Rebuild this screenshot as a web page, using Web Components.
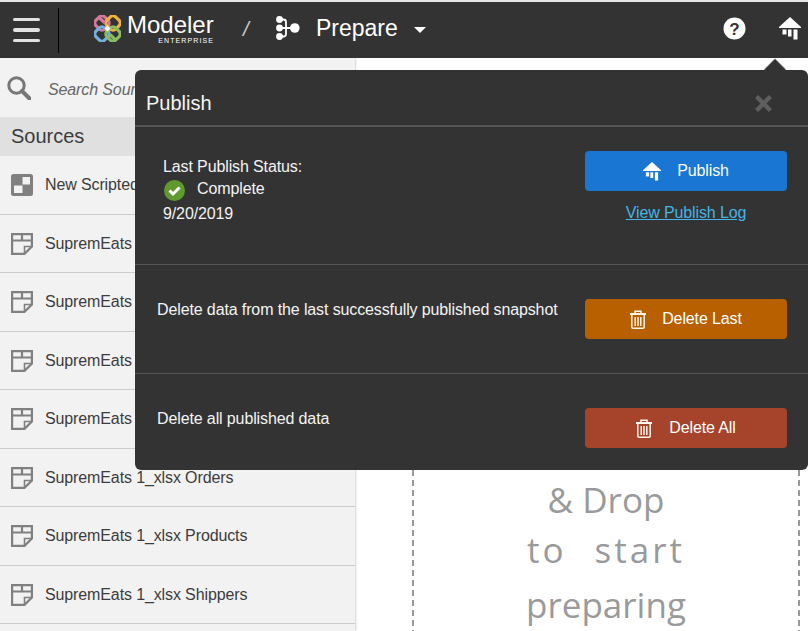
<!DOCTYPE html>
<html lang="en">
<head>
<meta charset="utf-8">
<title>Modeler Enterprise - Prepare</title>
<style>
    html, body { margin: 0; height: 100%; overflow: hidden; background: #fff; }
    body { font-family: "Liberation Sans", Arial, sans-serif; font-size: 16px; letter-spacing: -0.12px; }
    .body-row { display: flex; height: 573px; }
</style>
</head>
<body>
<app-header></app-header>
<div class="body-row">
    <source-panel>
        <source-item kind="script">New Scripted</source-item>
        <source-item>SupremEats</source-item>
        <source-item>SupremEats</source-item>
        <source-item>SupremEats</source-item>
        <source-item>SupremEats</source-item>
        <source-item>SupremEats 1_xlsx Orders</source-item>
        <source-item>SupremEats 1_xlsx Products</source-item>
        <source-item>SupremEats 1_xlsx Shippers</source-item>
    </source-panel>
    <drop-zone></drop-zone>
</div>
<publish-popover>
    <publish-row pad-left="28" pad-top="24" height="138" text-top="4">
        <div slot="info">
            <div>Last Publish Status:</div>
            <status-line>Complete</status-line>
            <div>9/20/2019</div>
        </div>
        <action-button kind="publish" slot="action">Publish</action-button>
        <a slot="link" href="#" style="color:#45b4e6">View Publish Log</a>
    </publish-row>
    <publish-row pad-left="22" pad-top="34" height="109" text-top="-1">
        <div slot="info">Delete data from the last successfully published snapshot</div>
        <action-button kind="last" slot="action">Delete Last</action-button>
    </publish-row>
    <publish-row pad-left="22" pad-top="34" height="96" text-top="-1" last>
        <div slot="info">Delete all published data</div>
        <action-button kind="all" slot="action">Delete All</action-button>
    </publish-row>
</publish-popover>

<script>
const PUBLISH_ICON = (w, h, color) => `
    <svg width="${w}" height="${h}" viewBox="0 0 22 23" fill="${color}">
        <path d="M11 0 L22 10 L22 11 L0 11 L0 10 Z"/>
        <rect x="3.5" y="12.5" width="4" height="5"/>
        <rect x="9" y="12.5" width="3.5" height="7"/>
        <rect x="14.5" y="12.5" width="4" height="10"/>
    </svg>`;

const TRASH_ICON = `
    <svg width="16" height="19" viewBox="0 0 16 19" fill="none" stroke="#fff5e8" stroke-width="1.5">
        <path d="M0 4 H16" stroke-width="2"/>
        <path d="M5 3.5 V1.2 H11 V3.5"/>
        <path d="M1.8 5 V17 Q1.8 18.2 3 18.2 H13 Q14.2 18.2 14.2 17 V5"/>
        <path d="M5.2 7 V16 M8 7 V16 M10.8 7 V16"/>
    </svg>`;

class AppHeader extends HTMLElement {
    connectedCallback() {
        this.attachShadow({ mode: 'open' });
        this.shadowRoot.innerHTML = `
            <style>
                :host {
                    display: flex;
                    align-items: center;
                    height: 56px;
                    border-top: 2px solid #e6e6e6;
                    background: #333;
                    color: #fff;
                    letter-spacing: 0;
                }
                .burger {
                    width: 27px;
                    margin: 0 18px 0 13px;
                    display: flex;
                    flex-direction: column;
                    gap: 7px;
                }
                .burger i { height: 3.5px; border-radius: 2px; background: #e2e2e2; }
                .divider { width: 1px; height: 45px; background: #000; margin-right: 35px; }
                .logo { display: block; margin: -3px 6px 0 0; }
                .brand { width: 87px; margin-top: -3px; }
                .brand b { display: block; font-weight: 400; font-size: 24px; line-height: 24px; }
                .brand span {
                    display: block;
                    text-align: right;
                    font-size: 7px;
                    line-height: 7px;
                    letter-spacing: 1.1px;
                }
                .slash { margin: -2px 0 0 29px; font-size: 21px; color: #c9c9c9; width: 33px; font-style: italic; }
                .flow { margin: -4px 16px 0 0; }
                .page { font-size: 23px; margin-top: -3px; }
                .caret {
                    width: 0; height: 0;
                    margin: 0 0 0 16px;
                    border: 6px solid transparent;
                    border-top-color: #fff;
                    border-bottom: 0;
                }
                .right { margin-left: auto; display: flex; align-items: center; gap: 33px; margin-right: 7px; }
                .right svg { margin-top: -3px; }
                svg { display: block; }
            </style>
            <div class="burger"><i></i><i></i><i></i></div>
            <div class="divider"></div>
            <svg class="logo" width="27" height="27" viewBox="0 0 27 27" fill="none" stroke-width="3.2">
                <rect x="-6.2" y="-6.2" width="12.4" height="12.4" rx="4" transform="translate(8 8) rotate(45)" stroke="#d6789a"/>
                <rect x="-6.2" y="-6.2" width="12.4" height="12.4" rx="4" transform="translate(19 8) rotate(45)" stroke="#eeb33f"/>
                <rect x="-6.2" y="-6.2" width="12.4" height="12.4" rx="4" transform="translate(8 19) rotate(45)" stroke="#73b0de"/>
                <rect x="-6.2" y="-6.2" width="12.4" height="12.4" rx="4" transform="translate(19 19) rotate(45)" stroke="#8dbb63"/>
                <path d="M5 2.5 L11 8" stroke="#d6789a"/>
                <path d="M21 24.5 L16 19.5" stroke="#8dbb63"/>
                <path d="M13.5 10.5 L16.5 13.5 L13.5 16.5 L10.5 13.5 Z" fill="#fff" stroke="none"/>
            </svg>
            <div class="brand"><b>Modeler</b><span>ENTERPRISE</span></div>
            <div class="slash">/</div>
            <svg class="flow" width="24" height="24" viewBox="0 0 24 24" fill="#fff">
                <circle cx="3.5" cy="3.5" r="3.4"/><circle cx="3.5" cy="12" r="3.4"/><circle cx="3.5" cy="20.5" r="3.4"/>
                <circle cx="18.8" cy="12" r="4.8"/>
                <path d="M4 3.5 H7.5 Q10 3.5 10 6 V18 Q10 20.5 7.5 20.5 H4 M4 12 H18" fill="none" stroke="#fff" stroke-width="1.8"/>
            </svg>
            <span class="page">Prepare</span>
            <div class="caret"></div>
            <div class="right">
                <svg width="23" height="23" viewBox="0 0 23 23">
                    <circle cx="11.5" cy="11.5" r="11" fill="#fff"/>
                    <text x="11.5" y="17.5" text-anchor="middle" font-family="Liberation Sans, sans-serif" font-weight="700" font-size="17" fill="#333">?</text>
                </svg>
                ${PUBLISH_ICON(22, 23, '#fff')}
            </div>
        `;
    }
}
customElements.define('app-header', AppHeader);

class SourcePanel extends HTMLElement {
    connectedCallback() {
        this.attachShadow({ mode: 'open' });
        this.shadowRoot.innerHTML = `
            <style>
                :host {
                    display: block;
                    flex: 0 0 355px;
                    background: #f2f2f2;
                    box-shadow: 1px 0 2px rgba(0, 0, 0, 0.18);
                    color: #3c3c3c;
                    overflow: hidden;
                }
                .search {
                    display: flex;
                    align-items: center;
                    box-sizing: border-box;
                    height: 59px;
                    padding: 4px 0 0 7px;
                    gap: 17px;
                }
                .search svg { margin-top: -4px; }
                .search span { font-style: italic; color: #666; }
                h2 {
                    margin: 0;
                    height: 39px;
                    line-height: 38px;
                    padding-left: 11px;
                    font-size: 20px;
                    font-weight: 400;
                    letter-spacing: 0;
                    background: #e0e0e0;
                }
            </style>
            <div class="search">
                <svg width="24" height="24" viewBox="0 0 24 24" fill="none" stroke="#777">
                    <circle cx="9.5" cy="9.5" r="7.7" stroke-width="3"/>
                    <path d="M15 15 L22.5 22.5" stroke-width="4" stroke-linecap="round"/>
                </svg>
                <span>Search Sources</span>
            </div>
            <h2>Sources</h2>
            <slot></slot>
        `;
    }
}
customElements.define('source-panel', SourcePanel);

class SourceItem extends HTMLElement {
    connectedCallback() {
        const icon = this.getAttribute('kind') === 'script'
            ? `<svg width="22" height="22" viewBox="0 0 22 22">
                   <rect width="22" height="22" rx="2.5" fill="#808080"/>
                   <rect x="11.5" y="3" width="7.5" height="7.5" fill="#f2f2f2"/>
                   <rect x="3" y="11.5" width="8.5" height="7.5" fill="#f2f2f2"/>
               </svg>`
            : `<svg width="22" height="22" viewBox="0 0 22 22" fill="none" stroke="#808080" stroke-width="2.2">
                   <path d="M1.1 1.1 H20.9 V13.5 L13.5 20.9 H1.1 Z"/>
                   <path d="M1.1 7.5 H20.9 M11 1.1 V7.5" />
                   <path d="M20.9 13.5 H13.5 V20.9" stroke-width="1.6"/>
               </svg>`;
        this.attachShadow({ mode: 'open' });
        this.shadowRoot.innerHTML = `
            <style>
                :host {
                    display: flex;
                    align-items: center;
                    box-sizing: border-box;
                    height: 58.5px;
                    padding: 0.5px 0 0 11px;
                    gap: 12px;
                    border-bottom: 1px solid #ccc;
                    white-space: nowrap;
                }
                svg { flex: none; display: block; }
            </style>
            ${icon}
            <slot></slot>
        `;
    }
}
customElements.define('source-item', SourceItem);

class DropZone extends HTMLElement {
    connectedCallback() {
        this.attachShadow({ mode: 'open' });
        this.shadowRoot.innerHTML = `
            <style>
                :host {
                    display: block;
                    flex: 1;
                    min-width: 0;
                    padding: 42px 8px 0 57px;
                    overflow: hidden;
                }
                .box {
                    height: 600px;
                    box-sizing: border-box;
                    padding-top: 322px;
                    text-align: center;
                    color: #9a9a9a;
                    font-family: "Open Sans", sans-serif;
                    font-size: 35px;
                    line-height: 52px;
                    letter-spacing: 0;
                    background:
                        repeating-linear-gradient(#999 0 6px, transparent 6px 10px) left top / 2px 100% no-repeat,
                        repeating-linear-gradient(#999 0 6px, transparent 6px 10px) right top / 2px 100% no-repeat;
                }
                .box span { display: block; }
                .start { margin-top: -2px; letter-spacing: 3px; word-spacing: 16px; }
                .prep { margin-top: 3px; }
            </style>
            <div class="box">
                <span>Drag</span>
                <span>&amp; Drop</span>
                <span class="start">to start</span>
                <span class="prep">preparing</span>
            </div>
        `;
    }
}
customElements.define('drop-zone', DropZone);

class PublishPopover extends HTMLElement {
    connectedCallback() {
        this.attachShadow({ mode: 'open' });
        this.shadowRoot.innerHTML = `
            <style>
                :host {
                    position: absolute;
                    left: 135px;
                    top: 70px;
                    width: 673px;
                    height: 400px;
                    background: #333;
                    color: #f4f4f4;
                    border-radius: 6px;
                }
                .arrow {
                    position: absolute;
                    right: 22px;
                    top: -11px;
                    width: 0; height: 0;
                    border: 11px solid transparent;
                    border-top: 0;
                    border-bottom-color: #333;
                    filter: drop-shadow(0 -1px 0 #c8c8c8);
                }
                header {
                    display: flex;
                    align-items: center;
                    justify-content: space-between;
                    box-sizing: border-box;
                    height: 57px;
                    padding: 12px 36px 0 11px;
                    border-bottom: 2px solid #555;
                    font-size: 20px;
                    letter-spacing: 0;
                }
                svg { display: block; }
            </style>
            <div class="arrow"></div>
            <header>
                <span>Publish</span>
                <svg width="17" height="17" viewBox="0 0 17 17" stroke="#5e5e5e" stroke-width="4.4">
                    <path d="M1.5 1.5 L15.5 15.5 M15.5 1.5 L1.5 15.5"/>
                </svg>
            </header>
            <slot></slot>
        `;
    }
}
customElements.define('publish-popover', PublishPopover);

class PublishRow extends HTMLElement {
    connectedCallback() {
        const last = this.hasAttribute('last');
        this.attachShadow({ mode: 'open' });
        this.shadowRoot.innerHTML = `
            <style>
                :host {
                    display: grid;
                    grid-template-columns: 1fr 202px;
                    box-sizing: border-box;
                    height: ${this.getAttribute('height')}px;
                    padding: ${this.getAttribute('pad-top')}px 21px 0 ${this.getAttribute('pad-left')}px;
                    border-bottom: ${last ? 0 : '1px solid #555'};
                    line-height: 24px;
                }
                .info { margin-top: ${this.getAttribute('text-top')}px; }
                .action { display: flex; flex-direction: column; align-items: center; gap: 10px; }
            </style>
            <div class="info"><slot name="info"></slot></div>
            <div class="action"><slot name="action"></slot><slot name="link"></slot></div>
        `;
    }
}
customElements.define('publish-row', PublishRow);

class StatusLine extends HTMLElement {
    connectedCallback() {
        this.attachShadow({ mode: 'open' });
        this.shadowRoot.innerHTML = `
            <style>
                :host { display: flex; align-items: flex-start; height: 25px; gap: 12px; margin: -2px 0 0 1px; }
                svg { display: block; margin-top: 3px; flex: none; }
            </style>
            <svg width="21" height="21" viewBox="0 0 21 21">
                <circle cx="10.5" cy="10.5" r="10.5" fill="#5f9a2f"/>
                <path d="M5.5 10.5 L9 14 L15.5 7.5" fill="none" stroke="#fff" stroke-width="3"/>
            </svg>
            <slot></slot>
        `;
    }
}
customElements.define('status-line', StatusLine);

class ActionButton extends HTMLElement {
    connectedCallback() {
        const kind = this.getAttribute('kind');
        const colors = { publish: '#1976d2', last: '#b86000', all: '#a5442a' };
        const gaps = { publish: 16, last: 16, all: 17 };
        const icon = kind === 'publish' ? PUBLISH_ICON(18, 19, '#fff') : TRASH_ICON;
        this.attachShadow({ mode: 'open' });
        this.shadowRoot.innerHTML = `
            <style>
                :host {
                    display: flex;
                    align-items: center;
                    justify-content: center;
                    width: 202px;
                    height: 40px;
                    gap: ${gaps[kind]}px;
                    background: ${colors[kind]};
                    color: #fff;
                    border-radius: 4px;
                }
                svg { display: block; }
            </style>
            ${icon}
            <slot></slot>
        `;
    }
}
customElements.define('action-button', ActionButton);
</script>
</body>
</html>
